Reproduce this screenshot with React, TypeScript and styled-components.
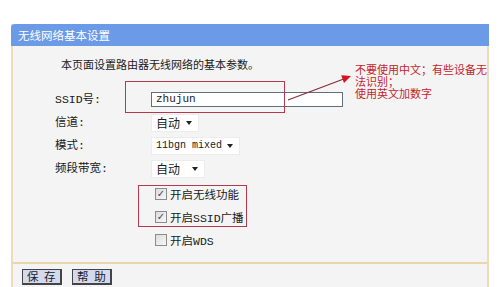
import React from "react";
import styled, { createGlobalStyle } from "styled-components";

const GlobalStyle = createGlobalStyle`
  body {
    margin: 0;
    background: #ffffff;
    font-family: "Liberation Mono", "Noto Sans CJK SC", monospace;
    font-size: 11px;
    color: #1a1a1a;
  }
`;

const App = () => {
  return (
    <Page>
      <GlobalStyle />
      <Panel>
        <Header>无线网络基本设置</Header>
        <Body>
          <Intro>本页面设置路由器无线网络的基本参数。</Intro>
          <Form>
            <Label>SSID号:</Label>
            <div>
              <TextInput>zhujun</TextInput>
            </div>
            <Label>信道:</Label>
            <div>
              <Select $width={48}>
                自动
                <Caret />
              </Select>
            </div>
            <Label>模式:</Label>
            <div>
              <Select $width={89}>
                <Latin>11bgn mixed</Latin>
                <Caret />
              </Select>
            </div>
            <Label>频段带宽:</Label>
            <div>
              <Select $width={54}>
                自动
                <Caret />
              </Select>
            </div>
          </Form>
          <Checks>
            <CheckRow>
              <CheckBox $checked>{"✓"}</CheckBox>
              开启无线功能
            </CheckRow>
            <CheckRow>
              <CheckBox $checked>{"✓"}</CheckBox>
              开启SSID广播
            </CheckRow>
            <CheckRow>
              <CheckBox />
              开启WDS
            </CheckRow>
          </Checks>

          <Mark $left={112} $top={35} $w={160} $h={32} />
          <Mark $left={125} $top={139} $w={109} $h={42} />
          <Arrow width="85" height="40" viewBox="0 0 85 40">
            <line x1="5" y1="30" x2="62" y2="8.5" stroke="#8b2a3a" strokeWidth="1.2" />
            <polygon points="68,6 61,13 58.2,5.2" fill="#d4141e" />
          </Arrow>
          <Note>
            不要使用中文；有些设备无
            <br />
            法识别；
            <br />
            使用英文加数字
          </Note>
        </Body>
        <Footer>
          <Button>保 存</Button>
          <Button>帮 助</Button>
        </Footer>
      </Panel>
    </Page>
  );
};

export default App;

const Page = styled.div`
  padding: 24px 0 0 11px;
`;

const Panel = styled.div`
  width: 478px;
  border-left: 2px solid #eadcbc;
  border-right: 2px solid #eadcbc;
  box-sizing: border-box;
  background: #f4f4f4;
`;

const Header = styled.div`
  height: 22px;
  margin: 0 -2px;
  padding-left: 7px;
  background: #6b9ae6;
  border-top-left-radius: 4px;
  color: #ffffff;
  font-family: "Noto Sans CJK SC", sans-serif;
  font-size: 11.5px;
  line-height: 22px;
`;

const Body = styled.div`
  position: relative;
  height: 216px;
  padding: 14px 0 0 0;
  box-sizing: border-box;
`;

const Intro = styled.div`
  padding-left: 48px;
  line-height: 12px;
`;

const Form = styled.div`
  display: grid;
  grid-template-columns: 96px auto;
  grid-auto-rows: 23px;
  align-items: center;
  margin-top: 16px;
  padding-left: 42px;
`;

const Label = styled.div`
  line-height: 14px;
  font-size: 11.5px;
`;

const TextInput = styled.div`
  width: 192px;
  height: 15px;
  box-sizing: border-box;
  border: 1px solid #5e6f80;
  background: #ffffff;
  padding-left: 4px;
  line-height: 13px;
`;

const Select = styled.div<{ $width: number }>`
  display: flex;
  align-items: center;
  justify-content: space-between;
  width: ${(p) => p.$width}px;
  height: 18px;
  box-sizing: border-box;
  padding: 0 6px 0 4px;
  background: #ffffff;
  border: 1px solid #ececec;
  white-space: nowrap;
  font-size: 12px;
`;

const Latin = styled.span`
  font-size: 10px;
`;

const Caret = styled.span`
  flex: none;
  width: 0;
  height: 0;
  border-left: 3.5px solid transparent;
  border-right: 3.5px solid transparent;
  border-top: 4px solid #222;
`;

const Checks = styled.div`
  display: grid;
  grid-auto-rows: 23px;
  margin-top: 2px;
  padding-left: 142px;
`;

const CheckRow = styled.div`
  display: flex;
  align-items: center;
  gap: 3px;
  font-size: 11.5px;
`;

const CheckBox = styled.span<{ $checked?: boolean }>`
  display: inline-flex;
  align-items: center;
  justify-content: center;
  width: 12px;
  height: 12px;
  box-sizing: border-box;
  border: 1px solid #8c8c8c;
  background: linear-gradient(135deg, #dcdcdc, #f8f8f8);
  color: #3c4a64;
  font-family: "DejaVu Sans", sans-serif;
  font-size: 10px;
  font-weight: bold;
  line-height: 1;
`;

const Mark = styled.div<{ $left: number; $top: number; $w: number; $h: number }>`
  position: absolute;
  left: ${(p) => p.$left}px;
  top: ${(p) => p.$top}px;
  width: ${(p) => p.$w}px;
  height: ${(p) => p.$h}px;
  box-sizing: border-box;
  border: 1.5px solid #b23a4c;
`;

const Arrow = styled.svg`
  position: absolute;
  left: 270px;
  top: 24px;
`;

const Note = styled.div`
  position: absolute;
  left: 342px;
  top: 17px;
  white-space: nowrap;
  color: #c4242c;
  font-family: "Noto Sans CJK SC", sans-serif;
  font-size: 11px;
  line-height: 12px;
`;

const Footer = styled.div`
  display: flex;
  gap: 10px;
  height: 25px;
  padding: 5px 0 0 9px;
  box-sizing: border-box;
  border-top: 2px solid #e9d6aa;
`;

const Button = styled.div`
  height: 16px;
  padding: 0 3px 0 4px;
  box-sizing: border-box;
  border: 1px solid #444;
  border-right-width: 2px;
  border-bottom-width: 2px;
  background: #d3d9f0;
  color: #222;
  font-family: "Noto Sans CJK SC", sans-serif;
  font-size: 11.5px;
  letter-spacing: 1.5px;
  line-height: 13px;
  white-space: pre;
`;
